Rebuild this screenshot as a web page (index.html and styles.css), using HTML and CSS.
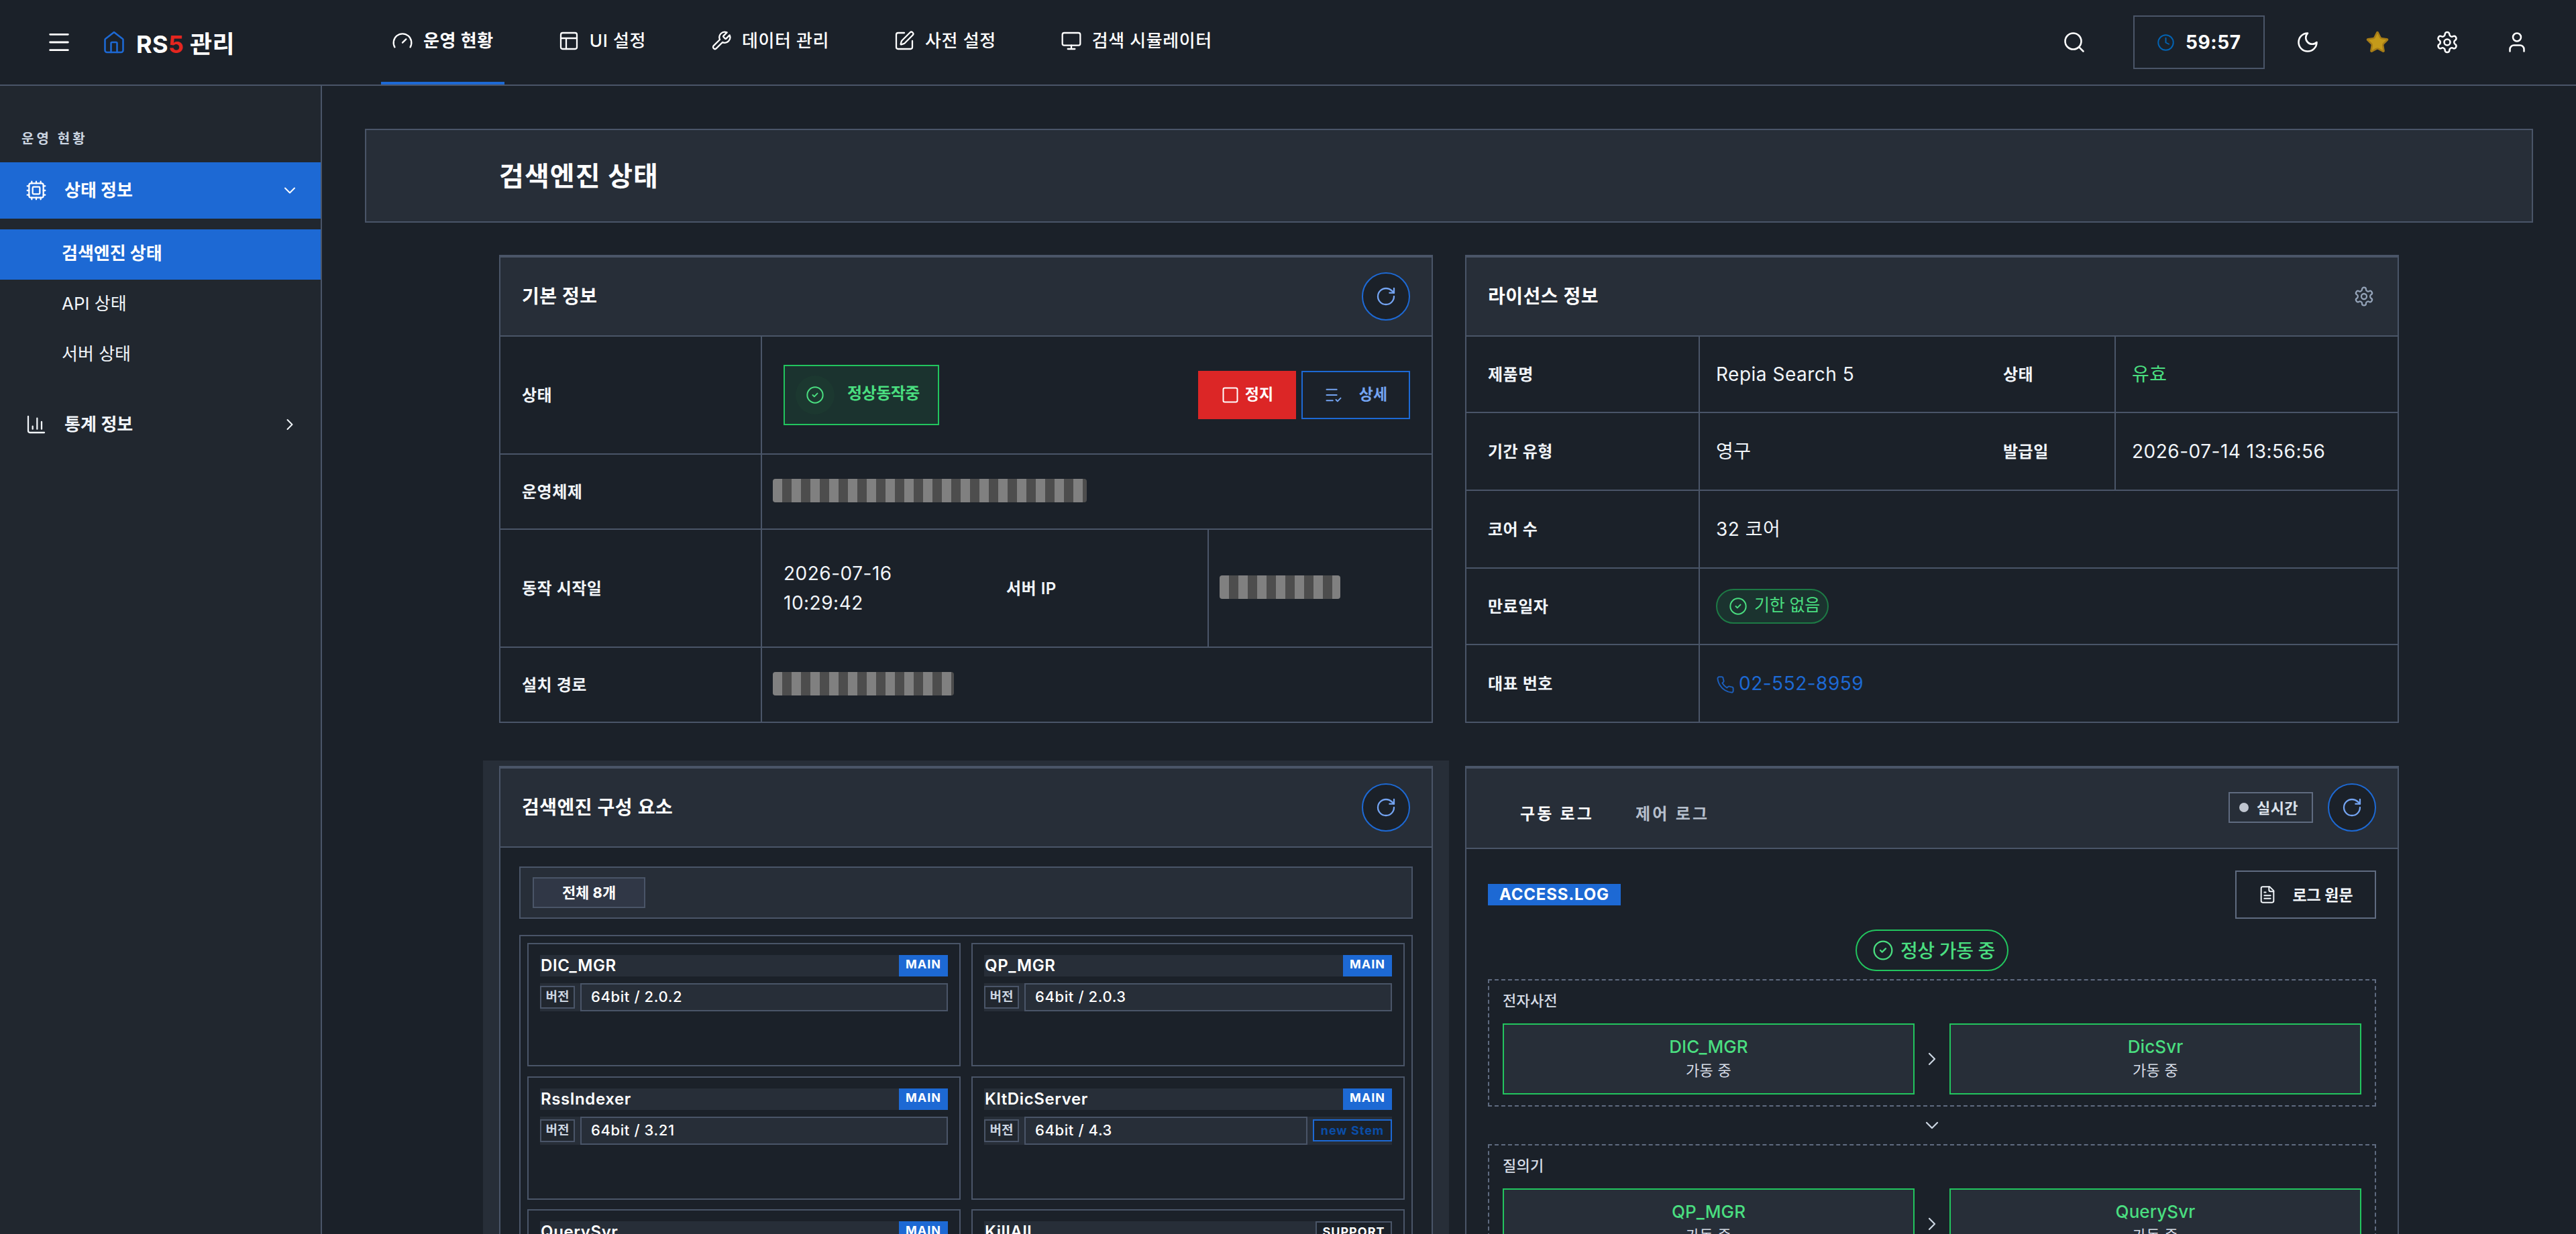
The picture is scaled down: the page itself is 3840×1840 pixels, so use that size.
FILE: index.html
```html
<!DOCTYPE html>
<html lang="ko">
<head>
    <meta charset="UTF-8">
    <meta name="viewport" content="width=device-width, initial-scale=1.0">
    <title>RS5 관리 - 검색엔진 상태</title>
    <link rel="stylesheet" href="styles.css">
</head>
<body>
    <!-- Icon set -->
    <svg class="icon-defs" xmlns="http://www.w3.org/2000/svg">
        <symbol id="i-menu" viewBox="0 0 24 24"><path d="M4 5h16M4 12h16M4 19h16"/></symbol>
        <symbol id="i-home" viewBox="0 0 24 24"><path d="M15 22v-9a1 1 0 0 0-1-1h-4a1 1 0 0 0-1 1v9"/><path d="M3 9.5a1 1 0 0 1 .4-.8L12 2l8.6 6.700a1 1 0 0 1 .4.8V20a2 2 0 0 1-2 2H5a2 2 0 0 1-2-2z"/></symbol>
        <symbol id="i-gauge" viewBox="0 0 24 24"><path d="m12 14 4-4"/><path d="M3.34 19a10 10 0 1 1 17.32 0"/></symbol>
        <symbol id="i-layout" viewBox="0 0 24 24"><rect x="3" y="3" width="18" height="18" rx="2"/><path d="M3 9h18M9 21V9"/></symbol>
        <symbol id="i-wrench" viewBox="0 0 24 24"><path d="M14.7 6.3a1 1 0 0 0 0 1.4l1.6 1.6a1 1 0 0 0 1.4 0l3.77-3.77a6 6 0 0 1-7.94 7.94l-6.91 6.91a2.12 2.12 0 0 1-3-3l6.91-6.91a6 6 0 0 1 7.94-7.94l-3.76 3.76z"/></symbol>
        <symbol id="i-edit" viewBox="0 0 24 24"><path d="M12 3H5a2 2 0 0 0-2 2v14a2 2 0 0 0 2 2h14a2 2 0 0 0 2-2v-7"/><path d="M18.375 2.625a1 1 0 0 1 3 3l-9.013 9.014a2 2 0 0 1-.853.505l-2.873.84a.5.5 0 0 1-.62-.62l.84-2.873a2 2 0 0 1 .506-.852z"/></symbol>
        <symbol id="i-monitor" viewBox="0 0 24 24"><rect x="2" y="3" width="20" height="14" rx="2"/><path d="M8 21h8M12 17v4"/></symbol>
        <symbol id="i-search" viewBox="0 0 24 24"><circle cx="11" cy="11" r="8"/><path d="m21 21-4.3-4.3"/></symbol>
        <symbol id="i-clock" viewBox="0 0 24 24"><circle cx="12" cy="12" r="10"/><path d="M12 6v6l4 2"/></symbol>
        <symbol id="i-moon" viewBox="0 0 24 24"><path d="M12 3a6 6 0 0 0 9 9 9 9 0 1 1-9-9Z"/></symbol>
        <symbol id="i-star" viewBox="0 0 24 24"><path d="M11.525 2.295a.53.53 0 0 1 .95 0l2.31 4.679a2.123 2.123 0 0 0 1.595 1.16l5.166.756a.53.53 0 0 1 .294.904l-3.736 3.638a2.123 2.123 0 0 0-.611 1.878l.882 5.14a.53.53 0 0 1-.771.56l-4.618-2.428a2.122 2.122 0 0 0-1.973 0L6.396 21.01a.53.53 0 0 1-.77-.56l.881-5.139a2.122 2.122 0 0 0-.611-1.879L2.16 9.795a.53.53 0 0 1 .294-.906l5.165-.755a2.122 2.122 0 0 0 1.597-1.16z"/></symbol>
        <symbol id="i-gear" viewBox="0 0 24 24"><path d="M12.22 2h-.44a2 2 0 0 0-2 2v.18a2 2 0 0 1-1 1.73l-.43.25a2 2 0 0 1-2 0l-.15-.08a2 2 0 0 0-2.73.73l-.22.38a2 2 0 0 0 .73 2.73l.15.1a2 2 0 0 1 1 1.72v.51a2 2 0 0 1-1 1.74l-.15.09a2 2 0 0 0-.73 2.73l.22.38a2 2 0 0 0 2.73.73l.15-.08a2 2 0 0 1 2 0l.43.25a2 2 0 0 1 1 1.73V20a2 2 0 0 0 2 2h.44a2 2 0 0 0 2-2v-.18a2 2 0 0 1 1-1.73l.43-.25a2 2 0 0 1 2 0l.15.08a2 2 0 0 0 2.73-.73l.22-.39a2 2 0 0 0-.73-2.73l-.15-.08a2 2 0 0 1-1-1.74v-.5a2 2 0 0 1 1-1.74l.15-.09a2 2 0 0 0 .73-2.73l-.22-.38a2 2 0 0 0-2.73-.73l-.15.08a2 2 0 0 1-2 0l-.43-.25a2 2 0 0 1-1-1.73V4a2 2 0 0 0-2-2z"/><circle cx="12" cy="12" r="3"/></symbol>
        <symbol id="i-user" viewBox="0 0 24 24"><path d="M19 21v-2a4 4 0 0 0-4-4H9a4 4 0 0 0-4 4v2"/><circle cx="12" cy="7" r="4"/></symbol>
        <symbol id="i-cpu" viewBox="0 0 24 24"><rect x="4" y="4" width="16" height="16" rx="2"/><rect x="8" y="8" width="8" height="8" rx="1"/><path d="M12 20v2M12 2v2M17 20v2M17 2v2M2 12h2M2 17h2M2 7h2M20 12h2M20 17h2M20 7h2M7 20v2M7 2v2"/></symbol>
        <symbol id="i-chart" viewBox="0 0 24 24"><path d="M3 3v16a2 2 0 0 0 2 2h16M18 17V9M13 17V5M8 17v-3"/></symbol>
        <symbol id="i-down" viewBox="0 0 24 24"><path d="m6 9 6 6 6-6"/></symbol>
        <symbol id="i-right" viewBox="0 0 24 24"><path d="m9 18 6-6-6-6"/></symbol>
        <symbol id="i-refresh" viewBox="0 0 24 24"><path d="M21 12a9 9 0 1 1-9-9c2.52 0 4.93 1 6.74 2.74L21 8"/><path d="M21 3v5h-5"/></symbol>
        <symbol id="i-check" viewBox="0 0 24 24"><circle cx="12" cy="12" r="10"/><path d="m9 12 2 2 4-4"/></symbol>
        <symbol id="i-stop" viewBox="0 0 24 24"><rect x="3" y="3" width="18" height="18" rx="2"/></symbol>
        <symbol id="i-list" viewBox="0 0 24 24"><path d="M16 5H3M16 12H3M11 19H3M15 18l2 2 4-4"/></symbol>
        <symbol id="i-phone" viewBox="0 0 24 24"><path d="M22 16.92v3a2 2 0 0 1-2.18 2 19.79 19.79 0 0 1-8.63-3.07 19.5 19.5 0 0 1-6-6 19.79 19.79 0 0 1-3.07-8.67A2 2 0 0 1 4.11 2h3a2 2 0 0 1 2 1.72 12.84 12.84 0 0 0 .7 2.81 2 2 0 0 1-.45 2.11L8.09 9.91a16 16 0 0 0 6 6l1.27-1.27a2 2 0 0 1 2.11-.45 12.84 12.84 0 0 0 2.81.7A2 2 0 0 1 22 16.92z"/></symbol>
        <symbol id="i-file" viewBox="0 0 24 24"><path d="M15 2H6a2 2 0 0 0-2 2v16a2 2 0 0 0 2 2h12a2 2 0 0 0 2-2V7Z"/><path d="M14 2v4a2 2 0 0 0 2 2h4M10 9H8M16 13H8M16 17H8"/></symbol>
    </svg>

    <header class="topbar">
        <div class="brand">
            <svg class="icon icon-menu"><use href="#i-menu"/></svg>
            <svg class="icon icon-home"><use href="#i-home"/></svg>
            <h1 class="logo">RS<span>5</span> 관리</h1>
        </div>
        <nav class="main-nav">
            <a class="nav-item active"><svg class="icon"><use href="#i-gauge"/></svg><span>운영 현황</span></a>
            <a class="nav-item"><svg class="icon"><use href="#i-layout"/></svg><span>UI 설정</span></a>
            <a class="nav-item"><svg class="icon"><use href="#i-wrench"/></svg><span>데이터 관리</span></a>
            <a class="nav-item"><svg class="icon"><use href="#i-edit"/></svg><span>사전 설정</span></a>
            <a class="nav-item"><svg class="icon"><use href="#i-monitor"/></svg><span>검색 시뮬레이터</span></a>
        </nav>
        <div class="tools">
            <svg class="icon tool"><use href="#i-search"/></svg>
            <div class="timer"><svg class="icon"><use href="#i-clock"/></svg>59:57</div>
            <svg class="icon tool"><use href="#i-moon"/></svg>
            <svg class="icon tool star"><use href="#i-star"/></svg>
            <svg class="icon tool"><use href="#i-gear"/></svg>
            <svg class="icon tool"><use href="#i-user"/></svg>
        </div>
    </header>

    <div class="layout">
        <aside class="sidebar">
            <div class="side-title">운영 현황</div>
            <a class="side-item active"><svg class="icon"><use href="#i-cpu"/></svg><span>상태 정보</span><svg class="icon chev"><use href="#i-down"/></svg></a>
            <div class="side-sub">
                <a class="active">검색엔진 상태</a>
                <a>API 상태</a>
                <a>서버 상태</a>
            </div>
            <a class="side-item"><svg class="icon"><use href="#i-chart"/></svg><span>통계 정보</span><svg class="icon chev"><use href="#i-right"/></svg></a>
        </aside>

        <main class="content">
            <div class="page-title"><h2>검색엔진 상태</h2></div>

            <div class="cards">
                <!-- Basic info -->
                <section class="card">
                    <div class="card-head">
                        <h3>기본 정보</h3>
                        <button class="refresh"><svg class="icon"><use href="#i-refresh"/></svg></button>
                    </div>
                    <div class="info basic">
                        <div class="row">
                            <div class="label">상태</div>
                            <div class="value state">
                                <div class="status-box"><i class="status-dot"><svg class="icon"><use href="#i-check"/></svg></i><span>정상동작중</span></div>
                                <div class="actions">
                                    <button class="btn stop"><svg class="icon"><use href="#i-stop"/></svg><span>정지</span></button>
                                    <button class="btn detail"><svg class="icon"><use href="#i-list"/></svg><span>상세</span></button>
                                </div>
                            </div>
                        </div>
                        <div class="row">
                            <div class="label">운영체제</div>
                            <div class="value masked"><span class="mask mask-os"></span></div>
                        </div>
                        <div class="row split">
                            <div class="label">동작 시작일</div>
                            <div class="value">2026-07-16<br>10:29:42</div>
                            <div class="label">서버 IP</div>
                            <div class="value masked"><span class="mask mask-ip"></span></div>
                        </div>
                        <div class="row">
                            <div class="label">설치 경로</div>
                            <div class="value masked"><span class="mask mask-path"></span></div>
                        </div>
                    </div>
                </section>

                <!-- License info -->
                <section class="card">
                    <div class="card-head">
                        <h3>라이선스 정보</h3>
                        <svg class="icon head-gear"><use href="#i-gear"/></svg>
                    </div>
                    <div class="info license">
                        <div class="row split">
                            <div class="label">제품명</div>
                            <div class="value">Repia Search 5</div>
                            <div class="label">상태</div>
                            <div class="value ok">유효</div>
                        </div>
                        <div class="row split">
                            <div class="label">기간 유형</div>
                            <div class="value">영구</div>
                            <div class="label">발급일</div>
                            <div class="value">2026-07-14 13:56:56</div>
                        </div>
                        <div class="row">
                            <div class="label">코어 수</div>
                            <div class="value">32 코어</div>
                        </div>
                        <div class="row">
                            <div class="label">만료일자</div>
                            <div class="value"><span class="pill"><svg class="icon"><use href="#i-check"/></svg><span>기한 없음</span></span></div>
                        </div>
                        <div class="row">
                            <div class="label">대표 번호</div>
                            <div class="value"><a class="phone"><svg class="icon"><use href="#i-phone"/></svg>02-552-8959</a></div>
                        </div>
                    </div>
                </section>

                <!-- Engine components -->
                <section class="card components">
                    <div class="card-head">
                        <h3>검색엔진 구성 요소</h3>
                        <button class="refresh"><svg class="icon"><use href="#i-refresh"/></svg></button>
                    </div>
                    <div class="comp-body">
                        <div class="filter"><button>전체 8개</button></div>
                        <div class="comp-list">
                            <div class="comp">
                                <div class="comp-head"><b>DIC_MGR</b><span class="tag">MAIN</span></div>
                                <div class="comp-row"><span class="ver">버전</span><span class="ver-value">64bit / 2.0.2</span></div>
                            </div>
                            <div class="comp">
                                <div class="comp-head"><b>QP_MGR</b><span class="tag">MAIN</span></div>
                                <div class="comp-row"><span class="ver">버전</span><span class="ver-value">64bit / 2.0.3</span></div>
                            </div>
                            <div class="comp">
                                <div class="comp-head"><b>RssIndexer</b><span class="tag">MAIN</span></div>
                                <div class="comp-row"><span class="ver">버전</span><span class="ver-value">64bit / 3.21</span></div>
                            </div>
                            <div class="comp">
                                <div class="comp-head"><b>KltDicServer</b><span class="tag">MAIN</span></div>
                                <div class="comp-row"><span class="ver">버전</span><span class="ver-value">64bit / 4.3</span><span class="stem">new Stem</span></div>
                            </div>
                            <div class="comp">
                                <div class="comp-head"><b>QuerySvr</b><span class="tag">MAIN</span></div>
                            </div>
                            <div class="comp">
                                <div class="comp-head"><b>KillAll</b><span class="tag support">SUPPORT</span></div>
                            </div>
                        </div>
                    </div>
                </section>

                <!-- Logs -->
                <section class="card logs">
                    <div class="card-head">
                        <div class="tabs"><a class="active">구동 로그</a><a>제어 로그</a></div>
                        <div class="live"><span>실시간</span></div>
                        <button class="refresh"><svg class="icon"><use href="#i-refresh"/></svg></button>
                    </div>
                    <div class="log-body">
                        <div class="log-top">
                            <span class="log-name">ACCESS.LOG</span>
                            <button class="btn raw"><svg class="icon"><use href="#i-file"/></svg><span>로그 원문</span></button>
                        </div>
                        <div class="running"><svg class="icon"><use href="#i-check"/></svg><span>정상 가동 중</span></div>
                        <div class="group">
                            <h4>전자사전</h4>
                            <div class="nodes">
                                <div class="node"><b>DIC_MGR</b><span>가동 중</span></div>
                                <svg class="icon"><use href="#i-right"/></svg>
                                <div class="node"><b>DicSvr</b><span>가동 중</span></div>
                            </div>
                        </div>
                        <div class="arrow"><svg class="icon"><use href="#i-down"/></svg></div>
                        <div class="group">
                            <h4>질의기</h4>
                            <div class="nodes">
                                <div class="node"><b>QP_MGR</b><span>가동 중</span></div>
                                <svg class="icon"><use href="#i-right"/></svg>
                                <div class="node"><b>QuerySvr</b><span>가동 중</span></div>
                            </div>
                        </div>
                    </div>
                </section>
            </div>
        </main>
    </div>
</body>
</html>
```
FILE: styles.css
```css
:root {
    --bg: #1b2129;
    --side: #21272f;
    --panel: #272e38;
    --line: #4a5568;
    --line-soft: #5f6b80;
    --blue: #1d69d4;
    --blue-light: #74a4f2;
    --green: #22c55e;
    --green-light: #4ade80;
    --text: #f1f5f9;
    --muted: #cbd5e1;
}

* {
    margin: 0;
    padding: 0;
    box-sizing: border-box;
}

body {
    width: 3840px;
    height: 1840px;
    overflow: hidden;
    font-family: Inter, "Noto Sans CJK KR", sans-serif;
    font-size: 26px;
    background: var(--bg);
    color: var(--text);
}

button {
    font: inherit;
    color: inherit;
}

.icon-defs {
    display: none;
}

.icon {
    width: 32px;
    height: 32px;
    flex: none;
    fill: none;
    stroke: currentColor;
    stroke-width: 1.7;
    stroke-linecap: round;
    stroke-linejoin: round;
}

/* Top bar */
.topbar {
    display: flex;
    height: 128px;
    border-bottom: 2px solid var(--line);
    color: #fff;
}

.brand {
    display: flex;
    align-items: center;
    width: 568px;
    padding-left: 68px;
}

.icon-menu {
    width: 40px;
    height: 40px;
    stroke-width: 1.7;
}

.icon-home {
    width: 36px;
    height: 36px;
    margin-left: 44px;
    color: var(--blue);
}

.logo {
    margin-left: 15px;
    padding-bottom: 1px;
    font-size: 36px;
    font-weight: 700;
    letter-spacing: 0.3px;
}

.logo span {
    color: #e5261f;
}

.main-nav {
    display: flex;
    gap: 64px;
}

.nav-item {
    display: flex;
    align-items: center;
    gap: 15px;
    padding: 0 16px 4px;
    font-weight: 500;
    letter-spacing: 0.6px;
}

.nav-item span {
    padding-bottom: 5px;
}

.nav-item.active {
    border-bottom: 4px solid var(--blue);
    padding-bottom: 0;
    font-weight: 700;
}

.tools {
    display: flex;
    align-items: center;
    margin-left: auto;
    padding-right: 70px;
}

.tool {
    width: 36px;
    height: 36px;
    margin-left: 68px;
}

.star {
    color: #a67c17;
    fill: #c49a1a;
}

.timer {
    display: flex;
    align-items: center;
    gap: 16px;
    width: 196px;
    height: 80px;
    margin: 0 -22px 0 70px;
    padding-left: 33px;
    border: 2px solid var(--line);
    font-size: 28px;
    font-weight: 700;
    letter-spacing: 0.6px;
}

.timer .icon {
    width: 27px;
    height: 27px;
    color: #0363b3;
}

/* Sidebar */
.layout {
    display: flex;
    height: 1712px;
    overflow: hidden;
}

.sidebar {
    width: 480px;
    padding-top: 62px;
    border-right: 2px solid var(--line);
    background: var(--side);
}

.side-title {
    height: 52px;
    padding-left: 32px;
    font-size: 20px;
    line-height: 35px;
    font-weight: 600;
    letter-spacing: 4px;
    color: var(--muted);
}

.side-item {
    display: flex;
    align-items: center;
    height: 84px;
    padding: 0 32px 0 38px;
    font-weight: 600;
}

.side-item span {
    flex: 1;
    margin-left: 26px;
    padding-bottom: 5px;
}

.side-item .chev {
    width: 28px;
    height: 28px;
}

.side-item.active,
.side-sub .active {
    background: var(--blue);
    color: #fff;
    font-weight: 700;
}

.side-sub {
    padding: 16px 0 24px;
}

.side-sub a {
    display: block;
    height: 75px;
    padding-left: 92px;
    line-height: 71px;
}

/* Page */
.content {
    flex: 1;
    padding: 64px 64px 0;
}

.page-title {
    display: flex;
    align-items: center;
    height: 140px;
    padding: 0 0 4px 198px;
    border: 2px solid var(--line);
    background: var(--panel);
}

.page-title h2 {
    font-size: 40px;
    font-weight: 700;
    letter-spacing: 1.1px;
    color: #fff;
}

.cards {
    display: grid;
    grid-template-columns: 1392px 1392px;
    gap: 64px 48px;
    margin: 48px 0 0 200px;
}

.card {
    border: 2px solid var(--line);
    border-top-width: 4px;
    background: var(--bg);
}

.card-head {
    display: flex;
    align-items: center;
    height: 118px;
    padding: 0 32px;
    border-bottom: 2px solid var(--line);
    background: var(--panel);
}

.card-head h3 {
    flex: 1;
    padding-bottom: 4px;
    font-size: 28px;
    font-weight: 600;
    letter-spacing: 0.5px;
    color: #fff;
}

.refresh {
    display: flex;
    align-items: center;
    justify-content: center;
    width: 72px;
    height: 72px;
    border: 2px solid var(--blue);
    border-radius: 50%;
    background: var(--bg);
    color: var(--blue-light);
}

.head-gear {
    margin-right: 2px;
    color: #94a3b8;
}

/* Info tables */
.row {
    display: grid;
    grid-template-columns: 390px 1fr;
    border-bottom: 2px solid var(--line);
}

.row:last-child {
    border-bottom: 0;
}

.license .row {
    grid-template-columns: 348px 1fr;
}

.basic {
    display: grid;
    grid-template-rows: 176px 112px 176px 110px;
}

.basic .split {
    grid-template-columns: 390px 332px 334px 1fr;
}

.license {
    display: grid;
    grid-template-rows: 114px 116px 116px 114px 114px;
}

.license .split {
    grid-template-columns: 348px 420px 200px 1fr;
}

.label {
    display: flex;
    align-items: center;
    padding: 0 0 3px 32px;
    border-right: 2px solid var(--line);
    font-size: 24px;
    font-weight: 600;
    letter-spacing: 0.5px;
}

.value {
    display: flex;
    align-items: center;
    padding: 0 0 1px 32px;
    font-size: 28px;
    line-height: 44px;
    letter-spacing: 0.5px;
}

.license .value {
    padding-left: 24px;
}

.value.state {
    justify-content: space-between;
    padding: 0 32px 0 32px;
}

.value.masked {
    padding-left: 16px;
}

.value.ok {
    color: var(--green-light);
}

.status-box {
    display: flex;
    align-items: center;
    gap: 19px;
    width: 232px;
    height: 90px;
    padding-left: 16px;
    border: 2px solid var(--green);
    background: #1b332f;
    color: var(--green-light);
    font-size: 24px;
    font-weight: 700;
    letter-spacing: -0.5px;
}

.status-box span {
    padding-bottom: 4px;
}

.status-dot {
    display: flex;
    align-items: center;
    justify-content: center;
    width: 58px;
    height: 58px;
    border-radius: 50%;
    background: #1c3830;
}

.status-dot .icon {
    width: 28px;
    height: 28px;
}

.actions {
    display: flex;
    gap: 8px;
}

.btn {
    display: flex;
    align-items: center;
    justify-content: center;
    height: 72px;
    border: 2px solid var(--blue);
    background: transparent;
    font-size: 23px;
    font-weight: 600;
}

.btn span {
    padding-bottom: 3px;
}

.btn .icon {
    width: 28px;
    height: 28px;
}

.btn.stop {
    gap: 8px;
    width: 146px;
    border: 0;
    background: #dc2626;
    color: #fff;
    font-weight: 700;
}

.btn.detail {
    gap: 24px;
    width: 162px;
    color: var(--blue-light);
}

.mask {
    height: 35px;
    margin-bottom: 2px;
    border-radius: 4px;
    background: repeating-linear-gradient(90deg, #808080 0 14px, #4d4d4d 14px 28px);
}

.mask-os {
    width: 468px;
}

.mask-ip {
    width: 180px;
}

.mask-path {
    width: 270px;
}

.pill {
    display: flex;
    align-items: center;
    gap: 10px;
    width: 168px;
    height: 52px;
    padding-left: 17px;
    border: 2px solid #1d7a45;
    border-radius: 26px;
    background: #1b332f;
    color: var(--green-light);
    font-size: 25px;
    letter-spacing: -0.2px;
    white-space: nowrap;
}

.pill span,
.running span {
    padding-bottom: 3px;
}

.pill .icon {
    width: 28px;
    height: 28px;
}

.phone {
    display: flex;
    align-items: center;
    gap: 6px;
    color: var(--blue);
}

.phone .icon {
    width: 28px;
    height: 28px;
    margin-top: 4px;
    opacity: 0.85;
}

/* Engine components */
.components {
    height: 760px;
    box-shadow: 0 16px 0 24px var(--panel);
}

.comp-body {
    padding: 28px;
}

.filter {
    height: 78px;
    padding: 14px 18px;
    border: 2px solid var(--line);
    background: var(--panel);
}

.filter button {
    display: block;
    width: 168px;
    height: 46px;
    padding-bottom: 4px;
    border: 2px solid var(--line);
    background: #303746;
    font-size: 22px;
    font-weight: 700;
    color: #fff;
}

.comp-list {
    display: grid;
    grid-template-columns: 646px 646px;
    gap: 14.5px 16px;
    margin-top: 24px;
    padding: 10px;
    border: 2px solid var(--line);
}

.comp {
    height: 184px;
    padding: 16px 17px;
    border: 2px solid var(--line);
}

.comp-head {
    display: flex;
    justify-content: space-between;
    height: 32px;
    background: var(--panel);
    font-size: 24px;
    line-height: 32px;
    letter-spacing: 0.6px;
    color: #fff;
}

.comp-head b {
    padding-left: 1px;
    font-weight: 600;
}

.tag {
    width: 73px;
    background: var(--blue);
    text-align: center;
    font-size: 18px;
    line-height: 28px;
    font-weight: 700;
    letter-spacing: 1px;
}

.tag.support {
    width: 114px;
    border: 2px solid var(--line);
    background: var(--bg);
}

.comp-row {
    display: flex;
    align-items: center;
    gap: 8px;
    height: 42px;
    margin-top: 10px;
    background: var(--panel);
}

.ver {
    width: 52px;
    height: 34px;
    border: 2px solid var(--line);
    background: var(--side);
    text-align: center;
    font-size: 19px;
    line-height: 30px;
    font-weight: 600;
    color: var(--muted);
}

.ver-value {
    flex: 1;
    height: 42px;
    padding-left: 14px;
    border: 2px solid var(--line);
    font-size: 22px;
    line-height: 36px;
    font-weight: 500;
    letter-spacing: 0.6px;
    color: #fff;
}

.stem {
    width: 118px;
    height: 33px;
    border: 2px solid var(--blue);
    background: var(--bg);
    text-align: center;
    font-size: 18px;
    line-height: 29px;
    font-weight: 700;
    letter-spacing: 1px;
    color: #0a4da8;
}

/* Logs */
.logs .card-head {
    height: 120px;
    padding-bottom: 2px;
}

.tabs {
    display: flex;
    flex: 1;
    gap: 62px;
    padding: 14px 0 0 48px;
    font-size: 24px;
    font-weight: 600;
    letter-spacing: 3.2px;
    color: #b6bfcc;
}

.tabs .active {
    color: #fff;
    font-weight: 700;
}

.live {
    display: flex;
    align-items: center;
    gap: 12px;
    width: 126px;
    height: 46px;
    margin-right: 22px;
    padding-left: 14px;
    border: 2px solid var(--line-soft);
    font-size: 22px;
    font-weight: 600;
    letter-spacing: 0.4px;
    color: #dbe1ea;
}

.live span {
    padding-bottom: 3px;
}

.live::before {
    content: "";
    width: 14px;
    height: 14px;
    border-radius: 50%;
    background: #c0c6d0;
}

.log-body {
    padding: 32px 32px 0;
}

.log-top {
    display: flex;
    align-items: center;
    justify-content: space-between;
}

.log-name {
    height: 32px;
    padding: 0 17px;
    background: var(--blue);
    font-size: 24px;
    line-height: 31px;
    font-weight: 700;
    letter-spacing: 0.8px;
    color: #fff;
}

.btn.raw {
    gap: 23px;
    width: 210px;
    border-color: var(--line-soft);
    font-weight: 700;
}

.running {
    display: flex;
    align-items: center;
    gap: 10px;
    width: 228px;
    height: 62px;
    margin: 16px auto 12px;
    padding-left: 23px;
    border: 2px solid var(--green);
    border-radius: 31px;
    color: var(--green-light);
    font-size: 28px;
    font-weight: 500;
    letter-spacing: -0.4px;
    white-space: nowrap;
}

.group {
    height: 190px;
    padding: 13px 20px;
    border: 2px dashed var(--line-soft);
}

.group h4 {
    height: 51px;
    font-size: 22px;
    line-height: 34px;
    font-weight: 500;
    letter-spacing: 0.2px;
    color: #d6dce6;
}

.nodes {
    display: flex;
    align-items: center;
    justify-content: space-between;
}

.nodes .icon {
    width: 32px;
    height: 32px;
    color: var(--muted);
}

.node {
    display: flex;
    flex-direction: column;
    align-items: center;
    width: 614px;
    height: 106px;
    padding-top: 15px;
    border: 2px solid var(--green);
    background: var(--panel);
}

.node b {
    font-size: 26px;
    line-height: 35px;
    font-weight: 500;
    letter-spacing: 0.1px;
    color: var(--green-light);
}

.node span {
    font-size: 22px;
    line-height: 36px;
    letter-spacing: 0.3px;
    color: #d6dce6;
}

.arrow {
    display: flex;
    align-items: center;
    justify-content: center;
    height: 56px;
}

.arrow .icon {
    color: var(--muted);
}
```
